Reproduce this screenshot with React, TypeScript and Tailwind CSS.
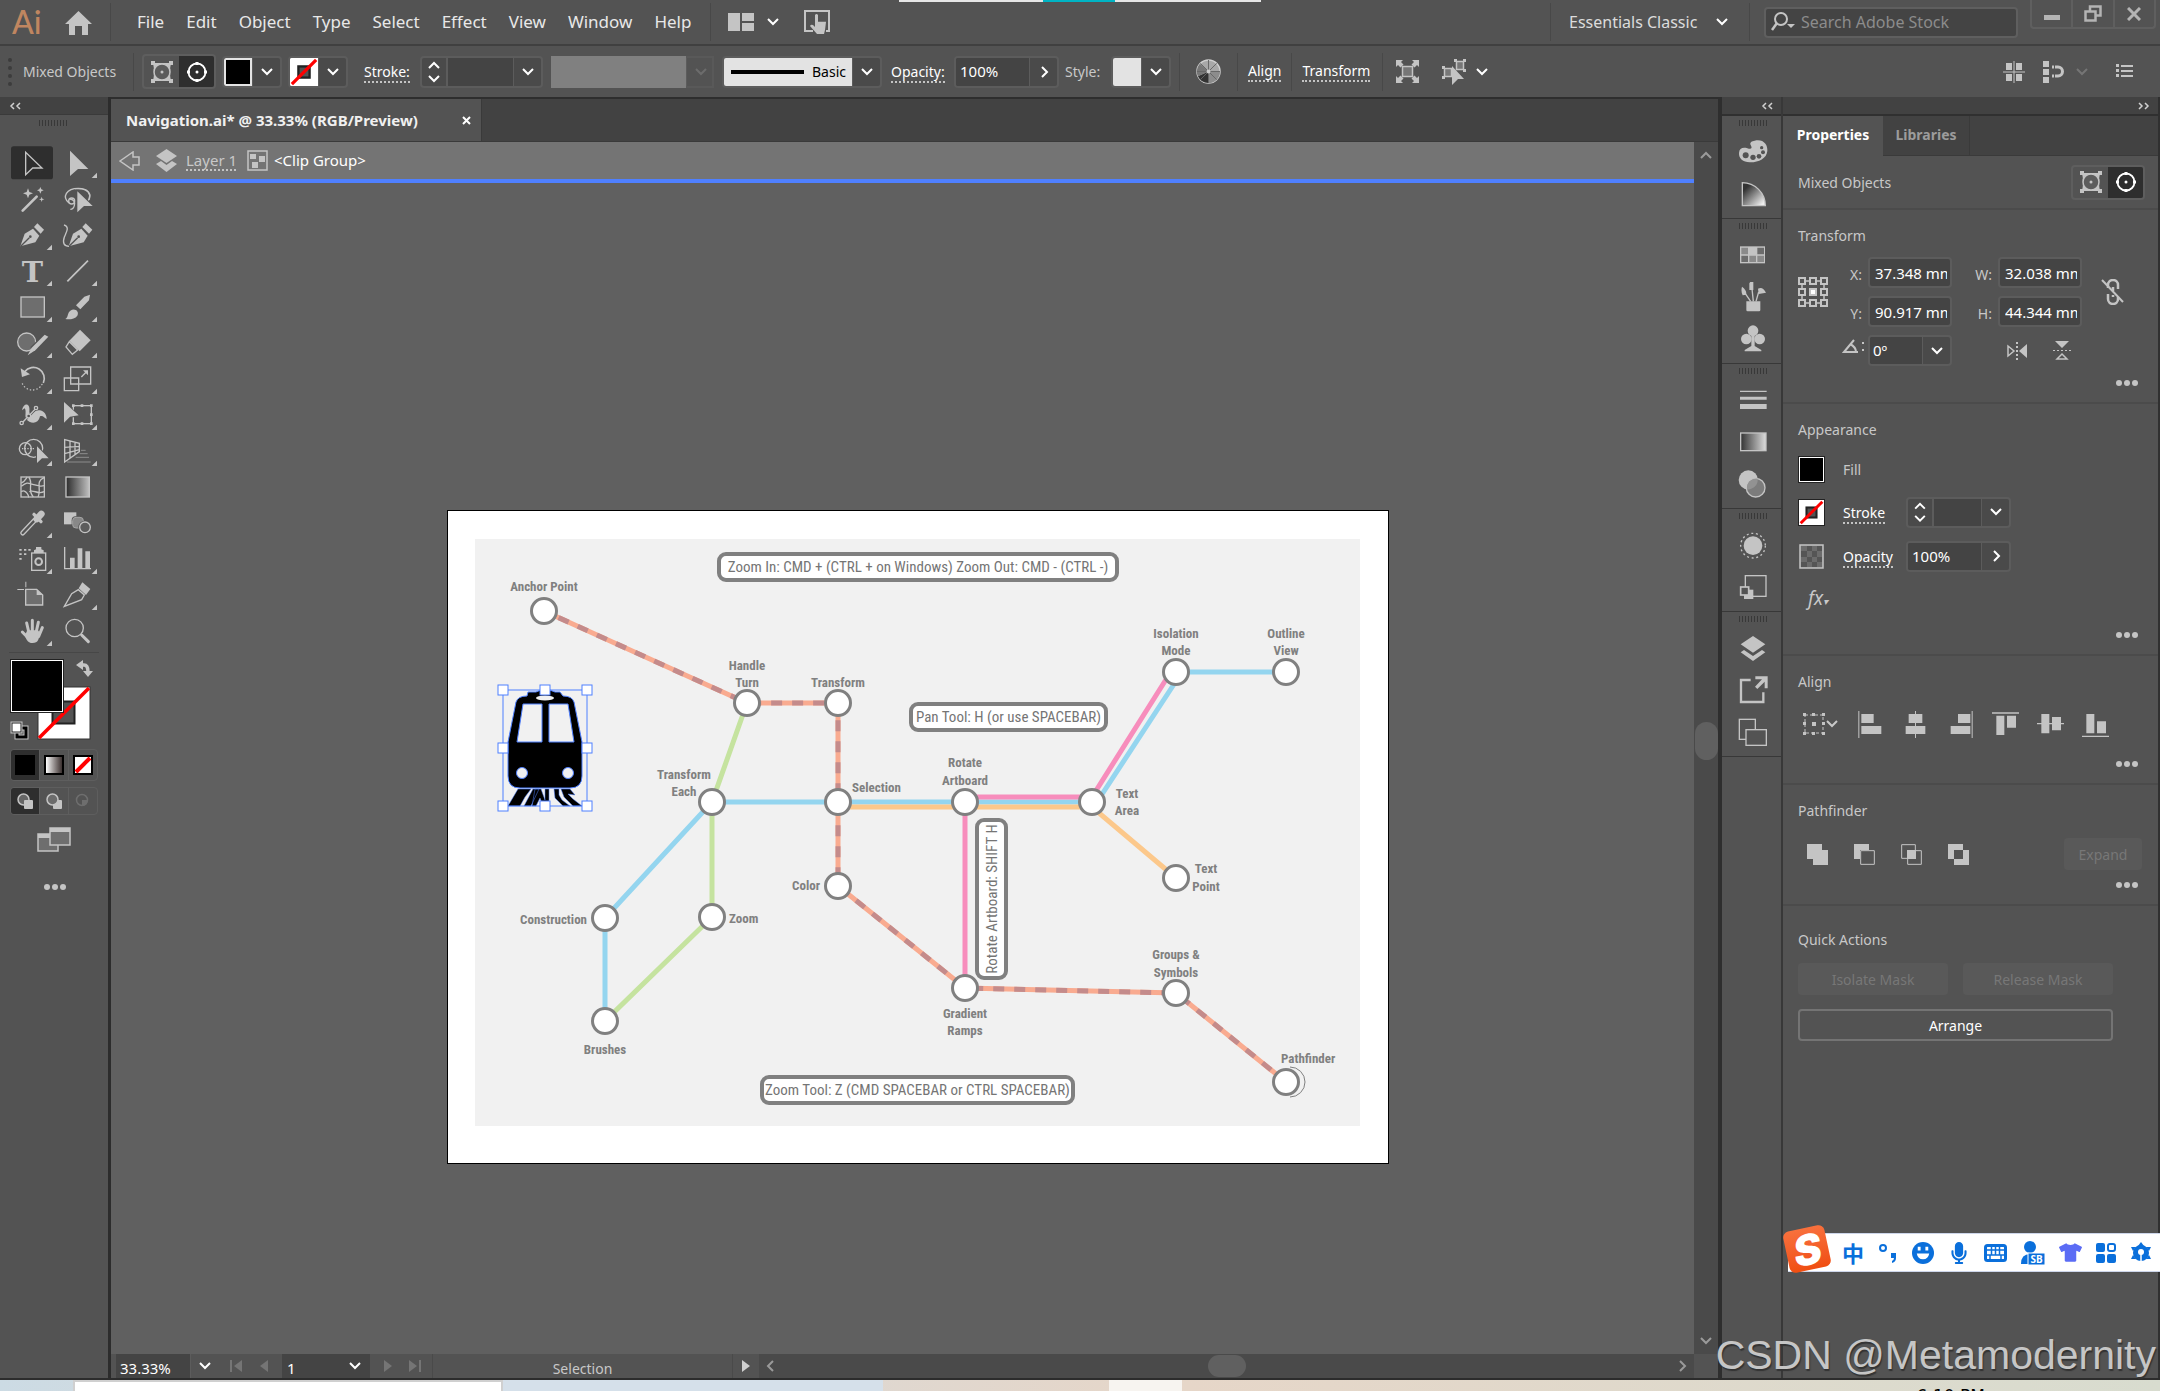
import React from "react";
import clsx from "clsx";
import { FaMicrophone, FaTshirt } from "react-icons/fa";

const menus = ["File", "Edit", "Object", "Type", "Select", "Effect", "View", "Window", "Help"];

/* ---------- small shared pieces ---------- */

const Chevron = ({ dir = "down", className = "" }: { dir?: string; className?: string }) => {
  const d: Record<string, string> = {
    down: "M2 4L7 9L12 4",
    up: "M2 10L7 5L12 10",
    right: "M5 2L10 7L5 12",
    left: "M9 2L4 7L9 12",
  };
  return (
    <svg className={clsx("size-[14px]", className)} viewBox="0 0 14 14" fill="none" stroke="currentColor" strokeWidth="2">
      <path d={d[dir]} />
    </svg>
  );
};

const DoubleChevron = ({ label, dir = "left" }: { label: string; dir?: string }) => (
  <button aria-label={label}>
    <svg className="h-2 w-3" viewBox="0 0 12 8" fill="none" stroke="#d0d0d0" strokeWidth="1.500">
      <path d={dir === "left" ? "M5 1L2 4L5 7M11 1L8 4L11 7" : "M1 1L4 4L1 7M7 1L10 4L7 7"} />
    </svg>
  </button>
);

const Icon = ({ children, className = "size-[30px]", box = "0 0 90 90" }: any) => (
  <svg className={className} viewBox={box} fill="#c4c4c4" stroke="none" aria-hidden="true">
    {children}
  </svg>
);

const Divider = ({ className = "" }) => <div className={clsx("h-[38px] w-px bg-[#484848]", className)} />;

const Grip = () => (
  <div className="flex h-[6px] gap-[2px]">
    {Array.from({ length: 10 }).map((_, i) => (
      <i key={i} className="w-px bg-[#383838]" />
    ))}
  </div>
);

const Dots = () => (
  <button aria-label="More options" className="flex gap-[2px]">
    <i className="size-[6px] rounded-full bg-[#c4c4c4]" />
    <i className="size-[6px] rounded-full bg-[#c4c4c4]" />
    <i className="size-[6px] rounded-full bg-[#c4c4c4]" />
  </button>
);

const Stepper = () => (
  <button aria-label="Step value" className="flex w-[26px] shrink-0 flex-col items-center justify-center border-r-2 border-[#5c5c5c] text-white">
    <Chevron dir="up" />
    <Chevron />
  </button>
);

const Arrow = ({ label, dir = "down", dim = false }: { label: string; dir?: string; dim?: boolean }) => (
  <button
    aria-label={label}
    className={clsx("flex w-7 shrink-0 items-center justify-center border-l border-[#5c5c5c]", dim ? "text-[#6c6c6c]" : "text-white")}
  >
    <Chevron dir={dir} />
  </button>
);

const NoneSwatch = ({ className = "" }) => (
  <svg className={className} viewBox="0 0 30 30">
    <rect width="30" height="30" fill="#fff" />
    <rect x="9" y="9" width="12" height="12" fill="#535353" stroke="#222" strokeWidth="2.5" />
    <path d="M2 28L28 2" stroke="#f00" strokeWidth="3.5" />
  </svg>
);

const EnvelopeToggle = () => (
  <div className="flex h-[35px] w-[74px] overflow-hidden rounded border-2 border-[#5e5e5e]">
    <button aria-label="Edit clipping path" className="flex flex-1 items-center justify-center">
      <Icon className="size-[24px]" box="0 0 24 24">
        <path d="M3 3H21Q19 12 21 21H3Q5 12 3 3Z" />
        <circle cx="12" cy="12" r="8" fill="#5c5c5c" stroke="#c4c4c4" strokeWidth="1.500" />
        <circle cx="12" cy="12" r="1.5" />
        <path d="M1 1h4v4H1zM19 1h4v4h-4zM1 19h4v4H1zM19 19h4v4h-4z" />
      </Icon>
    </button>
    <button aria-label="Edit contents" className="flex flex-1 items-center justify-center bg-[#2e2e2e]">
      <Icon className="size-[24px]" box="0 0 24 24">
        <circle cx="12" cy="12" r="8.5" fill="none" stroke="#fff" strokeWidth="1.8" />
        <circle cx="12" cy="12" r="1.5" fill="#fff" />
        <path d="M10.500 2h3v3h-3zM10.500 19h3v3h-3zM2 10.500h3v3H2zM19 10.500h3v3h-3z" fill="#fff" />
      </Icon>
    </button>
  </div>
);

/* ---------- top bars ---------- */

const MenuBar = () => (
  <header className="relative flex h-[46px] items-center border-b-2 border-[#404040] bg-[#535353]">
    <div className="absolute top-0 left-[41.6%] flex h-[2px] w-[362px] bg-[#e6e6e6]">
      <i className="ml-[144px] w-[72px] bg-[#00b4c4]" />
    </div>
    <span className="ml-3 w-[53px] font-[Lato] text-[32px] leading-8 font-medium text-[#c08660]">Ai</span>
    <button aria-label="Home">
      <Icon className="size-[27px]" box="0 0 27 27">
        <path d="M13.500 2L27 15H23V26H17V17H10V26H4V15H0Z" />
      </Icon>
    </button>
    <Divider className="ml-[18px] h-[29px]" />
    <nav className="ml-[15px] flex">
      {menus.map((m) => (
        <button key={m} className="px-[11px] text-[17px] text-[#e8e8e8]">
          {m}
        </button>
      ))}
    </nav>
    <Divider className="ml-2 h-[29px]" />
    <button aria-label="Arrange documents" className="ml-[17px] flex items-center gap-3 text-white">
      <Icon className="h-[18px] w-[26px]" box="0 0 26 18">
        <path d="M0 0h12v18H0zM14 0h12v8H14zM14 10h12v8H14z" />
      </Icon>
      <Chevron />
    </button>
    <button aria-label="Touch workspace" className="ml-6">
      <Icon className="h-[24px] w-[27px]" box="0 0 27 24">
        <path d="M9 21H1V1H25V21H22" fill="none" stroke="#c4c4c4" strokeWidth="2" />
        <path d="M11 5q1.500-2 3 0v7q1-1 2 0q1-1 2 0q1-1 2 0q1-1 2 0l-1 8-1 4h-7l-7-8q1-2 3-1l2 2z" />
      </Icon>
    </button>
    <div className="ml-auto flex items-center self-stretch">
      <Divider className="h-[29px]" />
      <label className="relative ml-[18px] flex items-center text-[#dcdcdc]">
        <select aria-label="Workspace" className="w-[160px] appearance-none bg-transparent text-[16px]">
          <option>Essentials Classic</option>
        </select>
        <Chevron className="pointer-events-none absolute right-0 text-white" />
      </label>
      <Divider className="ml-5 h-[29px]" />
      <label className="ml-[14px] flex h-[31px] w-[254px] items-center rounded border-2 border-[#5f5f5f] bg-[#444]">
        <Icon className="mx-[5px] h-[22px] w-[25px] shrink-0" box="0 0 25 22">
          <circle cx="10" cy="8" r="6" fill="none" stroke="#c4c4c4" strokeWidth="2" />
          <path d="M6 12L1 19" stroke="#c4c4c4" strokeWidth="2.500" />
          <path d="M16 13h8l-4 4z" />
        </Icon>
        <input aria-label="Search Adobe Stock" placeholder="Search Adobe Stock" className="w-full text-[16px] placeholder:text-[#8c8c8c]" />
      </label>
      <div className="mr-[4px] ml-3 flex h-[29px] w-[126px] self-start rounded-b border-2 border-t-0 border-[#5f5f5f] text-[#b4b4b4]">
        <button aria-label="Minimize" className="flex flex-1 items-center justify-center">
          <i className="mt-2 h-[5px] w-[16px] bg-[#b4b4b4]" />
        </button>
        <button aria-label="Restore" className="flex flex-1 items-center justify-center border-x-2 border-[#5f5f5f]">
          <svg className="size-[18px]" viewBox="0 0 18 18" fill="none" stroke="currentColor" strokeWidth="2.500">
            <path d="M6 6V1.500h10.500v9H12M1.500 6.500h10v9h-10z" />
          </svg>
        </button>
        <button aria-label="Close" className="flex flex-1 items-center justify-center">
          <svg className="size-[14px]" viewBox="0 0 14 14" fill="none" stroke="currentColor" strokeWidth="3">
            <path d="M1 1L13 13M13 1L1 13" />
          </svg>
        </button>
      </div>
    </div>
  </header>
);

const dotted = "border-b-2 border-dotted border-[#c4c4c4] leading-[18px] text-white";
const combo = "flex overflow-hidden rounded border-2 border-[#5c5c5c] bg-[#4a4a4a]";

const ControlBar = () => (
  <div className="flex h-[51px] items-center bg-[#535353] pl-2 text-[14px] text-[#c8c8c8]">
    <div className="h-7 w-1 border-l-4 border-dotted border-[#3c3c3c]" />
    <span className="ml-[11px] w-[110px]">Mixed Objects</span>
    <Divider className="mr-2" />
    <EnvelopeToggle />
    <div className={clsx(combo, "ml-[6px] h-8 w-[60px]")}>
      <button aria-label="Fill" className="flex-1 border-2 border-[#e4e4e4] bg-black" />
      <Arrow label="Fill menu" />
    </div>
    <div className={clsx(combo, "ml-[6px] h-8 w-[60px]")}>
      <button aria-label="Stroke colour" className="flex flex-1 items-center justify-center bg-white">
        <NoneSwatch className="size-[28px]" />
      </button>
      <Arrow label="Stroke menu" />
    </div>
    <div className="ml-[16px] w-14">
      <label htmlFor="stroke" className={dotted}>Stroke:</label>
    </div>
    <div className={clsx(combo, "h-8 w-[123px]")}>
      <Stepper />
      <input id="stroke" className="w-full min-w-0 bg-[#444]" />
      <Arrow label="Stroke weights" />
    </div>
    <div className="ml-2 h-8 w-[135px] bg-[#808080]" />
    <div className="flex h-8 w-7 border-2 border-l-0 border-[#595959]">
      <Arrow label="Profile" dim />
    </div>
    <div className={clsx(combo, "ml-[8px] h-8 w-[160px]")}>
      <button className="flex flex-1 items-center gap-2 bg-[#e3e3e3] pl-[7px] text-black">
        <i className="h-1 w-[73px] bg-black" />
        Basic
      </button>
      <Arrow label="Brush" />
    </div>
    <div className="ml-[9px] w-[63px]">
      <label htmlFor="opacity" className={dotted}>Opacity:</label>
    </div>
    <div className={clsx(combo, "h-8 w-[105px]")}>
      <input id="opacity" defaultValue="100%" className="w-full min-w-0 bg-[#444] pl-1 text-[15px] text-white" />
      <Arrow label="Opacity slider" dir="right" />
    </div>
    <span className="ml-[6px] w-[46px]">Style:</span>
    <div className={clsx(combo, "h-8 w-[60px]")}>
      <button aria-label="Graphic style" className="flex-1 bg-[#e3e3e3]" />
      <Arrow label="Style menu" />
    </div>
    <Divider className="ml-[8px]" />
    <button aria-label="Recolor artwork" className="mx-4">
      <Icon className="size-[25px]" box="0 0 26 26">
        <circle cx="13" cy="13" r="12" fill="#a8a8a8" stroke="#d0d0d0" strokeWidth="1.500" />
        <path d="M13 13L13 25A12 12 0 0 1 2 18Z" fill="#333" />
        <path d="M13 13L2 18A12 12 0 0 1 4 5Z" fill="#777" />
        <path d="M13 13L25 13A12 12 0 0 1 13 25Z" fill="#8c8c8c" />
        <path d="M13 1V25M1 13H25M4.500 4.500L21.500 21.500M21.500 4.500L4.500 21.500" stroke="#666" />
        <circle cx="13" cy="13" r="2" fill="#ccc" />
      </Icon>
    </button>
    <Divider className="mr-[10px]" />
    <button className={dotted}>Align</button>
    <Divider className="mx-[10px]" />
    <button className={dotted}>Transform</button>
    <Divider className="mx-[12px]" />
    <button aria-label="Isolate">
      <Icon className="size-[25px]" box="0 0 25 25">
        <rect x="7.500" y="7.500" width="10" height="10" fill="#777" stroke="#c4c4c4" strokeWidth="1.500" />
        <path d="M1 1h7L6 3l2.500 2.500-3 3L3 6 1 8zM24 1v7l-2-2-2.500 2.500-3-3L19 3l-2-2zM1 24v-7l2 2 2.500-2.500 3 3L6 22l2 2zM24 24h-7l2-2-2.500-2.500 3-3L22 19l2-2z" />
      </Icon>
    </button>
    <button aria-label="Select similar" className="ml-[22px] flex items-center gap-[7px] text-white">
      <Icon className="size-[26px]" box="0 0 26 26">
        <path d="M2.500 9.500h7v8h-7zM14.500 2.500h7v8h-7z" fill="#777" stroke="#c4c4c4" strokeWidth="1.500" />
        <path d="M0 7h3v3H0zM0 17h3v3H0zM12 0h3v3h-3zM21 0h3v3h-3zM21 10h3v3h-3z" />
        <path d="M10 7L22 20H16L10 26Z" />
      </Icon>
      <Chevron />
    </button>
    <div className="mr-[27px] ml-auto flex items-center text-[#c4c4c4]">
      <button aria-label="Snap to grid">
        <Icon className="size-[22px]" box="0 0 22 22">
          <path d="M3 2h6v7H3zM13 2h6v7h-6zM3 13h6v7H3zM13 13h6v7h-6zM10.500 0h1v22h-1zM0 10.500h22v1H0z" />
        </Icon>
      </button>
      <button aria-label="Snap to pixel" className="ml-[18px] flex items-center gap-[10px] text-[#757575]">
        <Icon className="size-[22px]" box="0 0 22 22">
          <path d="M0 0h6v6H0zM0 8h6v6H0zM0 16h6v6H0z" />
          <path d="M9 6h6a4.500 4.500 0 0 1 0 9h-6" fill="none" stroke="#c4c4c4" strokeWidth="3" />
          <path d="M11 4h1v13h-1z" fill={bg} />
        </Icon>
        <Chevron />
      </button>
      <button aria-label="Control panel menu" className="ml-[27px]">
        <Icon className="size-[17px]" box="0 0 17 17">
          <path d="M0 1h3v3H0zM5 2h12v2H5zM0 6h3v3H0zM5 7h12v2H5zM0 11h3v3H0zM5 12h12v2H5z" />
        </Icon>
      </button>
    </div>
  </div>
);

/* ---------- left toolbar ---------- */

const bg = "#535353";
const line = { fill: "none", stroke: "#c4c4c4", strokeWidth: 4 };

const tools: { name: string; more?: boolean; art: React.ReactNode }[] = [
  { name: "Selection", art: <path d="M47 22V89L68 69H96Z" {...line} /> },
  { name: "Direct Selection", more: true, art: <path d="M45 17V93L69 72H100Z" /> },
  {
    name: "Magic Wand",
    art: (
      <>
        <path d="M38 89L80 47" {...line} strokeWidth="8" strokeLinecap="round" />
        <path d="M54 22L58 33L69 37L58 41L54 52L50 41L39 37L50 33ZM91 18L94 25L101 28L94 31L91 38L88 31L81 28L88 25ZM95 47L97 53L103 55L97 57L95 63L93 57L87 55L93 53Z" />
      </>
    ),
  },
  {
    name: "Lasso",
    art: (
      <>
        <path d="M42 66C20 48 34 22 70 22C98 22 112 38 100 58" {...line} />
        <circle cx="50" cy="60" r="9" {...line} />
        <path d="M44 54C54 54 62 62 58 74C56 82 52 85 46 85" {...line} />
        <path d="M63 24V102L90 79H118L63 24Z" fill={bg} />
        <path d="M60 23Q98 20 104 42L103 56" {...line} />
        <path d="M67 31V94L87 75H113Z" />
      </>
    ),
  },
  {
    name: "Pen",
    more: true,
    art: (
      <>
        <path d="M31 88L44 50L69 35L88 56L76 76Z" />
        <path d="M82 19L102 38L92 50L72 30Z" />
        <path d="M32 88L58 62" stroke={bg} strokeWidth="4" />
        <circle cx="61" cy="59" r="4" fill={bg} />
      </>
    ),
  },
  {
    name: "Curvature",
    art: (
      <>
        <path d="M41 88L54 50L79 35L98 56L86 76Z" />
        <path d="M92 19L112 38L102 50L82 30Z" />
        <path d="M42 88L68 62" stroke={bg} strokeWidth="4" />
        <circle cx="71" cy="59" r="4" fill={bg} />
        <path d="M27 24C45 30 34 46 28 60C22 78 27 88 42 88" {...line} />
      </>
    ),
  },
  {
    name: "Type",
    more: true,
    art: (
      <text x="67" y="86" textAnchor="middle" fontSize="86" fontWeight="bold" fontFamily="DejaVu Serif, serif">
        T
      </text>
    ),
  },
  { name: "Line Segment", more: true, art: <path d="M37 85L99 23" {...line} strokeWidth="5" /> },
  { name: "Rectangle", more: true, art: <rect x="33" y="24" width="70" height="60" {...line} fill="#6e6e6e" /> },
  {
    name: "Paintbrush",
    more: true,
    art: (
      <path d="M105 17L102 34L76 61L63 49L88 23ZM31 90C41 84 36 72 46 65C60 56 74 68 67 80C60 91 42 92 31 90Z" />
    ),
  },
  {
    name: "Shaper",
    more: true,
    art: (
      <>
        <circle cx="50" cy="51" r="27" {...line} fill="#6e6e6e" />
        <path d="M108 34L68 74" stroke={bg} strokeWidth="20" />
        <path d="M104 29L115 35L76 76L53 91L65 68Z" />
      </>
    ),
  },
  {
    name: "Eraser",
    more: true,
    art: (
      <>
        <path d="M75 14L107 46L74 79L43 47Z" />
        <path d="M43 50L33 66L52 88L68 75Z" {...line} />
      </>
    ),
  },
  {
    name: "Rotate",
    more: true,
    art: (
      <>
        <path d="M44 32A33 33 0 0 1 100 66" {...line} strokeWidth="5" />
        <path d="M32 22L36 48L60 40Z" />
        <path d="M96 70A33 33 0 0 1 35 62" {...line} strokeDasharray="1 9" strokeLinecap="round" />
      </>
    ),
  },
  {
    name: "Scale",
    more: true,
    art: (
      <>
        <path d="M47 18H107V69H47ZM28 51H71V89H28Z" {...line} />
        <path d="M79 48L96 31" {...line} />
        <path d="M84 28H99V43Z" />
      </>
    ),
  },
  {
    name: "Width",
    more: true,
    art: (
      <>
        <path d="M36 40C40 16 62 16 58 44C60 60 74 36 90 40C104 42 110 56 110 66C100 62 100 54 90 58C84 84 60 80 48 66C44 58 50 40 44 34Z" />
        <path d="M36 78L78 34" stroke={bg} strokeWidth="8" />
        <path d="M36 78L78 34" {...line} />
        <circle cx="35" cy="78" r="5" {...line} fill={bg} />
        <circle cx="78" cy="33" r="5" {...line} fill={bg} />
        <circle cx="56" cy="57" r="6" {...line} fill={bg} />
      </>
    ),
  },
  {
    name: "Free Transform",
    more: true,
    art: (
      <>
        <rect x="55" y="26" width="54" height="54" {...line} />
        <path d="M27 10V82L48 61H78Z" fill={bg} />
        <path d="M27 15V77L45 59L71 55Z" />
        <path d="M51 22h8v8h-8zM77 22h8v8h-8zM105 22h8v8h-8zM105 49h8v8h-8zM105 76h8v8h-8zM77 76h8v8h-8zM51 76h8v8h-8z" />
      </>
    ),
  },
  {
    name: "Shape Builder",
    more: true,
    art: (
      <>
        <circle cx="71" cy="46" r="27" {...line} />
        <circle cx="46" cy="47" r="18" {...line} />
        <path d="M36 47H76" {...line} strokeDasharray="4 4" />
        <path d="M78 32V98L97 78H122Z" fill={bg} />
        <path d="M81 40V90L96 76H116Z" />
      </>
    ),
  },
  {
    name: "Perspective Grid",
    more: true,
    art: (
      <>
        <path d="M29 20V87L73 56V31ZM45 24V76M60 28V66M29 43L73 40M29 62L73 50" {...line} />
        <path d="M78 52H92M74 62H98M62 73H102M36 87H107" fill="none" stroke="#8c8c8c" strokeWidth="3" />
      </>
    ),
  },
  {
    name: "Mesh",
    art: (
      <>
        <rect x="33" y="24" width="70" height="60" {...line} />
        <path d="M34 42C44 40 48 28 52 24M34 52C52 38 54 42 68 46S90 54 102 50M34 68C46 58 60 84 54 84M56 24C72 44 50 62 70 84M102 26C74 38 96 60 84 84M58 68C70 60 84 78 102 68" {...line} />
      </>
    ),
  },
  {
    name: "Gradient",
    art: <rect x="33" y="24" width="70" height="60" {...line} fill="url(#toolGrad)" />,
  },
  {
    name: "Eyedropper",
    more: true,
    art: (
      <>
        <path d="M38 84L74 46" stroke="#c4c4c4" strokeWidth="15" strokeLinecap="round" />
        <path d="M38 84L74 46" stroke={bg} strokeWidth="7" strokeLinecap="round" />
        <path d="M72 28L93 50" stroke="#c4c4c4" strokeWidth="10" strokeLinecap="round" />
        <path d="M80 42L94 27" stroke="#c4c4c4" strokeWidth="20" strokeLinecap="round" />
      </>
    ),
  },
  {
    name: "Blend",
    art: (
      <>
        <rect x="27" y="22" width="37" height="36" />
        <rect x="50" y="34" width="38" height="38" rx="12" fill={bg} />
        <rect x="53" y="37" width="32" height="32" rx="10" fill="#888" stroke="#a4a4a4" strokeWidth="3" />
        <circle cx="90" cy="67" r="20" fill={bg} />
        <circle cx="90" cy="67" r="16" {...line} fill="#5c5c5c" />
      </>
    ),
  },
  {
    name: "Symbol Sprayer",
    more: true,
    art: (
      <>
        <rect x="65" y="36" width="42" height="52" {...line} />
        <path d="M72 36V28L78 25V18H94V25L101 28V36Z" />
        <circle cx="86" cy="62" r="10" {...line} strokeWidth="6" />
        <path d="M28 24h7v5h-7zM42 24h7v5h-7zM55 24h7v5h-7zM28 37h7v5h-7zM42 37h7v5h-7zM28 51h7v5h-7z" />
      </>
    ),
  },
  {
    name: "Column Graph",
    more: true,
    art: (
      <>
        <path d="M29 18V83H108" {...line} />
        <path d="M45 50h14v32h-14zM68 22h14v60h-14zM91 31h14v51h-14z" />
      </>
    ),
  },
  {
    name: "Artboard",
    art: (
      <>
        <path d="M47 37H80L98 54V84H47Z" {...line} fill="#6e6e6e" />
        <path d="M80 37V54H98ZM22 36H42V39H22ZM46 14H49V31H46Z" />
      </>
    ),
  },
  {
    name: "Slice",
    more: true,
    art: (
      <>
        <path d="M28 88L50 50L70 38L88 54L80 68Z" {...line} />
        <path d="M82 16L106 36L93 54L71 34Z" />
      </>
    ),
  },
  {
    name: "Hand",
    more: true,
    art: (
      <>
        <path d="M50 30L57 60M67 22V60M85 28L78 60M97 44L86 70M37 57L56 76" stroke="#c4c4c4" strokeWidth="9" strokeLinecap="round" />
        <path d="M52 52H84L92 62L84 82Q80 90 68 90Q56 90 50 80L44 68Z" />
      </>
    ),
  },
  {
    name: "Zoom",
    art: (
      <>
        <circle cx="59" cy="45" r="26" {...line} />
        <path d="M80 66L100 86" {...line} strokeWidth="9" strokeLinecap="round" />
      </>
    ),
  },
];

const Toolbar = () => (
  <aside className="flex w-[111px] shrink-0 flex-col border-r-[3px] border-[#2c2c2c] bg-[#535353]">
    <div className="flex h-[18px] items-center border-b border-[#3a3a3a] bg-[#424242] pl-[9px]">
      <DoubleChevron label="Collapse tools" />
    </div>
    <div className="mt-[5px] ml-[39px]">
      <Grip />
    </div>
    <div className="mt-[19px] ml-[10px] grid w-[90px] grid-cols-2">
      {tools.map((t, i) => (
        <button key={t.name} aria-label={t.name} className="h-9">
          <Icon className="h-9 w-[45px]" box="0 0 135 108">
            {i === 0 && <rect x="3" y="4" width="126" height="99" rx="8" fill="#2e2e2e" />}
            {t.name === "Gradient" && (
              <linearGradient id="toolGrad">
                <stop offset="0" stopColor="#2c2c2c" />
                <stop offset="1" stopColor="#c0c0c0" />
              </linearGradient>
            )}
            {t.art}
            {t.more && <path d="M126 83V99H110Z" />}
          </Icon>
        </button>
      ))}
    </div>
    <div className="mx-[9px] mt-[3px] h-px bg-[#474747]" />
    <Icon className="mt-[6px] ml-[10px] h-[83px] w-[84px]" box="0 0 84 83">
      <rect x="28" y="28" width="52" height="52" fill="#fff" stroke="#333" />
      <rect x="42.500" y="42.500" width="22" height="22" fill="#535353" stroke="#222" strokeWidth="2" />
      <path d="M29 79L79 29" stroke="#f00" strokeWidth="3.500" />
      <rect x="0.500" y="0.500" width="53" height="53" fill="#000" stroke="#222" />
      <rect x="1.500" y="1.500" width="51" height="51" fill="#000" stroke="#fff" />
      <path d="M70 6H74Q78 6 78 13" fill="none" stroke="#c4c4c4" strokeWidth="3.500" />
      <path d="M66 6L73 1V11ZM73 12H83L78 18Z" />
      <rect x="7" y="69" width="9" height="9" fill="none" stroke="#c4c4c4" strokeWidth="5" />
      <rect x="7" y="69" width="9" height="9" fill="none" stroke="#000" strokeWidth="3" />
      <rect x="1" y="63" width="11" height="11" fill="#fff" stroke="#c4c4c4" />
      <rect x="2" y="64" width="9" height="9" fill="#fff" stroke="#222" />
    </Icon>
    <div className="mt-[7px] ml-[10px] flex h-8 w-[88px] divide-x divide-[#5e5e5e] overflow-hidden rounded border border-[#5e5e5e]">
      <button aria-label="Color" className="flex flex-1 items-center justify-center bg-[#2e2e2e]">
        <i className="size-5 bg-black" />
      </button>
      <button aria-label="Gradient" className="flex flex-1 items-center justify-center">
        <i className="size-5 border-2 border-black bg-linear-to-r from-white to-[#3c3231]" />
      </button>
      <button aria-label="None" className="flex flex-1 items-center justify-center">
        <svg className="size-5" viewBox="0 0 20 20">
          <rect x="1" y="1" width="18" height="18" fill="#fff" stroke="#000" strokeWidth="2" />
          <path d="M3 17L17 3" stroke="#f00" strokeWidth="4" />
        </svg>
      </button>
    </div>
    <div className="mt-[6px] ml-[10px] flex h-7 w-[88px] divide-x divide-[#5e5e5e] overflow-hidden rounded border border-[#5e5e5e]">
      <button aria-label="Draw normal" className="flex flex-1 items-center justify-center bg-[#2e2e2e]">
        <Icon className="size-4" box="0 0 16 16">
          <circle cx="6.500" cy="6.500" r="5.500" fill="#666" stroke="#c4c4c4" strokeWidth="1.500" />
          <rect x="7" y="7" width="9" height="9" rx="1" />
        </Icon>
      </button>
      <button aria-label="Draw behind" className="flex flex-1 items-center justify-center">
        <Icon className="size-4" box="0 0 16 16">
          <rect x="7" y="7" width="9" height="9" rx="1" />
          <circle cx="6.500" cy="6.500" r="5.500" fill="#6c6c6c" stroke="#c4c4c4" strokeWidth="1.500" />
        </Icon>
      </button>
      <button aria-label="Draw inside" className="flex flex-1 items-center justify-center">
        <Icon className="size-4" box="0 0 16 16">
          <circle cx="7" cy="7" r="5.500" fill="none" stroke="#6e6e6e" strokeWidth="1.500" />
          <path d="M7 7h6a6 6 0 0 1-6 6z" fill="#6e6e6e" />
        </Icon>
      </button>
    </div>
    <button aria-label="Screen mode" className="mt-3 ml-[37px] w-[34px]">
      <Icon className="h-[25px] w-[34px]" box="0 0 34 25">
        <rect x="1" y="7" width="20" height="17" fill="#6e6e6e" stroke="#c4c4c4" strokeWidth="1.500" />
        <rect x="1" y="7" width="20" height="4" />
        <rect x="13" y="1" width="20" height="17" fill="#6e6e6e" stroke="#c4c4c4" strokeWidth="1.500" />
        <rect x="13" y="1" width="20" height="4" />
      </Icon>
    </button>
    <div className="mt-8 ml-11">
      <Dots />
    </div>
  </aside>
);

/* ---------- artboard ---------- */

const stations = [
  [544, 611], [747, 703], [838, 703], [712, 802], [838, 802], [838, 886], [605, 918], [712, 917], [605, 1021],
  [1176, 672], [1286, 672], [965, 802], [1092, 802], [1176, 878], [965, 988], [1176, 993], [1286, 1082],
];

const labels: [number, number, "start" | "middle" | "end", string][] = [
  [544, 591, "middle", "Anchor Point"],
  [747, 670, "middle", "Handle"],
  [747, 687, "middle", "Turn"],
  [838, 687, "middle", "Transform"],
  [684, 779, "middle", "Transform"],
  [684, 796, "middle", "Each"],
  [852, 792, "start", "Selection"],
  [820, 890, "end", "Color"],
  [587, 924, "end", "Construction"],
  [729, 923, "start", "Zoom"],
  [605, 1054, "middle", "Brushes"],
  [1176, 638, "middle", "Isolation"],
  [1176, 655, "middle", "Mode"],
  [1286, 638, "middle", "Outline"],
  [1286, 655, "middle", "View"],
  [965, 767, "middle", "Rotate"],
  [965, 785, "middle", "Artboard"],
  [1127, 798, "middle", "Text"],
  [1127, 815, "middle", "Area"],
  [1206, 873, "middle", "Text"],
  [1206, 891, "middle", "Point"],
  [965, 1018, "middle", "Gradient"],
  [965, 1035, "middle", "Ramps"],
  [1176, 959, "middle", "Groups &"],
  [1176, 977, "middle", "Symbols"],
  [1281, 1063, "start", "Pathfinder"],
];

const notes: [number, number, number, string][] = [
  [719, 554, 398, "Zoom In: CMD + (CTRL + on Windows) Zoom Out: CMD - (CTRL -)"],
  [911, 704, 195, "Pan Tool: H (or use SPACEBAR)"],
  [762, 1077, 311, "Zoom Tool: Z (CMD SPACEBAR or CTRL SPACEBAR)"],
];

const dashed = "M544 611L747 703H838V886L965 988L1176 993L1286 1082";

const Artboard = () => (
  <svg
    className="h-[654px] w-[942px] shrink-0 border border-black bg-white"
    viewBox="448 511 940 652"
    fontFamily="'Roboto Condensed', 'Liberation Sans Narrow', Roboto, sans-serif"
  >
    <rect x="475" y="539" width="885" height="587" fill="#f1f1f1" />
    <g fill="none" strokeWidth="5">
      <path d="M747 703L712 802V917L605 1021" stroke="#c5e39f" />
      <path d="M605 1021V918L712 802H1092M1095 805L1180 675M1176 672H1286" stroke="#94d5ef" />
      <path d="M838 807H1092L1176 878" stroke="#fcc88b" />
      <path d="M965 988V797H1092L1172 670" stroke="#f78dbc" />
      <path d={dashed} stroke="#f9ab90" />
      <path d={dashed} stroke="#c48b8b" strokeDasharray="11 10" strokeDashoffset="5" />
    </g>
    {stations.map(([x, y], i) => (
      <circle key={i} cx={x} cy={y} r="12.500" fill="#fff" stroke="#808080" strokeWidth="3" />
    ))}
    <path d="M1290 1067A15 15 0 0 1 1290 1097" fill="none" stroke="#808080" strokeWidth="1" />
    <g fill="#808080" fontSize="13" fontWeight="bold">
      {labels.map(([x, y, anchor, text], i) => (
        <text key={i} x={x} y={y} textAnchor={anchor}>
          {text}
        </text>
      ))}
    </g>
    <g fill="#fff" stroke="#808080" strokeWidth="4">
      {notes.map(([x, y, w]) => (
        <rect key={y} x={x} y={y} width={w} height="26" rx="7" />
      ))}
      <rect x="977" y="820" width="29" height="158" rx="7" />
    </g>
    <g fill="#757575" fontSize="15" textAnchor="middle">
      {notes.map(([x, y, w, text]) => (
        <text key={y} x={x + w / 2} y={y + 18}>
          {text}
        </text>
      ))}
      <text transform="translate(997 899) rotate(-90)">Rotate Artboard: SHIFT H</text>
    </g>
    {/* train */}
    <path d="M528 692H536Q545 687 555 692H560L563 696Q572 696 574 702L582 742V776Q582 788 570 788H520Q508 788 508 776V742L516 702Q518 696 527 696Z" fill="#000" stroke="#4f80ff" strokeWidth="1" />
    <path d="M523 704H542V742H517ZM549 704H568L574 742H549Z" fill="#f1f1f1" stroke="#4f80ff" strokeWidth="1" />
    <ellipse cx="545" cy="698" rx="9" ry="2.500" fill="#f1f1f1" />
    <circle cx="522" cy="773" r="5.500" fill="#f1f1f1" stroke="#4f80ff" strokeWidth="1" />
    <circle cx="568" cy="773" r="5.500" fill="#f1f1f1" stroke="#4f80ff" strokeWidth="1" />
    <path
      d="M518 789H531L525 797L520 806H508ZM533 789H539L531 806H524ZM535 789H541L545 800V789H549V806H543L540 798L536 806H532ZM554 789H559V795L562 800L570 806H563L555 798ZM561 789H570L575 795L568 794L573 799L582 806H573L564 797Z"
      fill="#000"
      stroke="#4f80ff"
      strokeWidth="0.500"
    />
    <rect x="503" y="690" width="84" height="116" fill="none" stroke="#4f80ff" />
    {[503, 545, 587].map((x) =>
      [690, 748, 806].map((y) =>
        x === 545 && y === 748 ? null : (
          <rect key={x + "-" + y} x={x - 5} y={y - 5} width="10" height="10" fill="#fff" stroke="#4f80ff" />
        )
      )
    )}
  </svg>
);

/* ---------- document window ---------- */

const StatusBar = () => (
  <footer className="flex h-[24px] items-stretch bg-[#535353] text-[14px] text-[#c8c8c8]">
    <input aria-label="Zoom" defaultValue="33.33%" className="ml-[5px] w-[74px] bg-[#444] pt-1 pl-1 text-[15px] text-white" />
    <Arrow label="Zoom levels" />
    <div className="flex w-[64px] items-center justify-around px-1 text-[#757575]">
      <svg className="h-3 w-4" viewBox="0 0 16 12" fill="currentColor"><path d="M2 0h2v12H2zM14 0v12L6 6z" /></svg>
      <svg className="h-3 w-4" viewBox="0 0 16 12" fill="currentColor"><path d="M12 0v12L4 6z" /></svg>
    </div>
    <label className="relative flex w-[88px] items-center bg-[#444] text-[15px] text-white">
      <select aria-label="Artboard" className="w-full appearance-none bg-transparent pt-1 pl-[5px]">
        <option>1</option>
      </select>
      <Chevron className="pointer-events-none absolute right-2" />
    </label>
    <div className="flex w-[62px] items-center justify-around px-1 text-[#757575]">
      <svg className="h-3 w-4" viewBox="0 0 16 12" fill="currentColor"><path d="M4 0v12L12 6z" /></svg>
      <svg className="h-3 w-4" viewBox="0 0 16 12" fill="currentColor"><path d="M12 0h2v12h-2zM2 0v12L10 6z" /></svg>
    </div>
    <div className="flex w-[301px] items-center justify-center border-x border-[#4a4a4a] pt-1">Selection</div>
    <button aria-label="Status menu" className="flex w-[26px] items-center justify-center">
      <svg className="h-3 w-2" viewBox="0 0 8 12" fill="#d0d0d0"><path d="M0 0v12L8 6z" /></svg>
    </button>
    <div className="flex flex-1 items-center justify-between bg-[#4a4a4a] px-[5px] text-[#9a9a9a]">
      <Chevron dir="left" />
      <i className="h-[22px] w-[38px] rounded-full bg-[#606060]" />
      <Chevron dir="right" />
    </div>
    <div className="w-[24px] bg-[#535353]" />
  </footer>
);

const Document = () => (
  <main className="flex min-w-0 flex-1 flex-col border-t-2 border-r-[4px] border-[#2e2e2e]">
    <div className="flex h-[43px] border-b border-[#3a3a3a] bg-[#424242]">
      <div className="flex w-[371px] items-center justify-between border-r border-[#3a3a3a] bg-[#535353] pr-[10px] pl-[15px] text-[15px] font-bold text-[#f0f0f0]">
        Navigation.ai* @ 33.33% (RGB/Preview)
        <button aria-label="Close document">
          <svg className="size-[9px]" viewBox="0 0 9 9" stroke="#fff" strokeWidth="2"><path d="M1 1L8 8M8 1L1 8" /></svg>
        </button>
      </div>
    </div>
    <div className="flex flex-1">
      <div className="flex flex-1 flex-col bg-[#606060]">
        <div className="flex h-[41px] items-center border-b-4 border-[#4f80ff] bg-[#747474] pl-2 text-[15px] text-white">
          <Icon className="h-[20px] w-[21px]" box="0 0 21 20">
            <path d="M1 10L14 1V6H20V14H14V19Z" {...line} strokeWidth="1.500" />
          </Icon>
          <Icon className="ml-4 h-[23px] w-[21px]" box="0 0 21 23">
            <path d="M10.500 0L21 7L10.500 14L0 7ZM0 15L5 12L10.500 16L16 12L21 15L10.500 23Z" />
          </Icon>
          <a href="#layer" className="ml-[9px] w-[50px] border-b-2 border-dotted border-[#c4c4c4] leading-[18px] whitespace-nowrap text-[#c8c8c8]">Layer 1</a>
          <Icon className="mr-[6px] ml-[11px] size-[21px]" box="0 0 21 21">
            <path d="M1 1H20V20H1Z" {...line} strokeWidth="1.500" />
            <path d="M3 4h6v5H3zM12 6h6v6h-6zM5 12h6v6H5z" />
          </Icon>
          &lt;Clip Group&gt;
        </div>
        <div className="flex flex-1 items-center justify-center pt-[136px] pl-[31px]">
          <Artboard />
        </div>
      </div>
      <div className="flex w-[24px] flex-col items-center justify-between bg-[#4a4a4a] py-[6px] text-[#9a9a9a]">
        <Chevron dir="up" />
        <i className="mb-[14px] h-[38px] w-[23px] rounded-full bg-[#606060]" />
        <Chevron />
      </div>
    </div>
    <StatusBar />
  </main>
);

/* ---------- collapsed panel dock ---------- */

const dock: { name: string; art: React.ReactNode }[][] = [
  [
    {
      name: "Color",
      art: (
        <>
          <path d="M50 11C75 5 90 22 88 42C86 65 60 77 35 76C15 75 2 65 3 48C4 34 14 30 28 34C40 38 44 34 38 24C34 16 42 12 50 11Z" />
          <g fill={bg}>
            <circle cx="23" cy="55" r="9" />
            <circle cx="45" cy="61" r="8" />
            <circle cx="63" cy="58" r="7" />
            <circle cx="75" cy="46" r="6" />
            <circle cx="71" cy="32" r="5" />
          </g>
        </>
      ),
    },
    {
      name: "Color Guide",
      art: (
        <>
          <linearGradient id="guide" x1="0" y1="0" x2="1" y2="1">
            <stop offset="0.200" stopColor="#333" />
            <stop offset="0.900" stopColor="#eee" />
          </linearGradient>
          <path d="M13 11V80H82A69 69 0 0 0 13 11Z" fill="url(#guide)" stroke="#c4c4c4" strokeWidth="4" />
        </>
      ),
    },
  ],
  [
    {
      name: "Swatches",
      art: (
        <>
          <rect x="6" y="19" width="75" height="51" />
          <path d="M10 23h20v20H10zM58 47h20v19H58zM34 47h20v19H34z" fill="#8a8a8a" />
          <path d="M58 23h20v20H58zM10 47h20v19H10z" fill="#6c6c6c" />
        </>
      ),
    },
    {
      name: "Brushes",
      art: (
        <>
          <path d="M25 58H67V84Q67 88 63 88H29Q25 88 25 84Z" />
          <path d="M38 58L20 32M46 58L42 20M54 58L62 30" {...line} />
          <path d="M12 14Q28 26 24 38L14 40Q8 28 12 14ZM38 -2L46 0V24H34V4ZM60 20Q74 12 84 32L62 36Z" />
        </>
      ),
    },
    {
      name: "Symbols",
      art: (
        <>
          <circle cx="45" cy="20" r="16" />
          <circle cx="25" cy="45" r="16" />
          <circle cx="65" cy="45" r="16" />
          <path d="M40 30H50V66L70 78V82H20V78L40 66Z" />
        </>
      ),
    },
  ],
  [
    { name: "Stroke", art: <path d="M6 17h80v4H6zM6 35h80v9H6zM6 57h80v15H6z" /> },
    {
      name: "Gradient",
      art: (
        <>
          <linearGradient id="dockGrad">
            <stop offset="0" stopColor="#333" />
            <stop offset="1" stopColor="#ddd" />
          </linearGradient>
          <rect x="8" y="18" width="76" height="53" fill="url(#dockGrad)" stroke="#c4c4c4" strokeWidth="4" />
        </>
      ),
    },
    {
      name: "Transparency",
      art: (
        <>
          <circle cx="31" cy="33" r="29" />
          <circle cx="53" cy="56" r="28" fill="#7c7c7c" stroke="#c4c4c4" strokeWidth="4" />
          <path d="M59 29A29 29 0 0 1 27 61A28 28 0 0 1 59 29Z" fill="#929292" />
        </>
      ),
    },
  ],
  [
    {
      name: "Appearance",
      art: (
        <>
          <circle cx="45" cy="47" r="28" />
          <circle cx="45" cy="47" r="37" {...line} strokeDasharray="6 8" />
        </>
      ),
    },
    {
      name: "Graphic Styles",
      art: (
        <>
          <rect x="22" y="11" width="62" height="62" {...line} />
          <rect x="18" y="53" width="28" height="28" fill="#c4c4c4" />
          <rect x="8" y="45" width="24" height="24" {...line} strokeWidth="5" fill={bg} />
        </>
      ),
    },
  ],
  [
    { name: "Layers", art: <path d="M45 9L82 34L45 59L8 34ZM8 58L18 51L45 69L72 51L82 58L45 84Z" /> },
    {
      name: "Asset Export",
      art: (
        <>
          <path d="M38 15H9V81H76V52" {...line} strokeWidth="7" />
          <path d="M52 4H89V40H80V20L58 42L51 35L72 13H52Z" />
        </>
      ),
    },
    {
      name: "Artboards",
      art: (
        <>
          <rect x="4" y="7" width="48" height="60" {...line} />
          <rect x="24" y="38" width="61" height="47" {...line} fill={bg} />
        </>
      ),
    },
  ],
];

const Dock = () => (
  <aside className="flex w-[61px] shrink-0 flex-col border-r-2 border-[#383838] bg-[#535353]">
    <div className="flex h-[19px] shrink-0 items-center justify-end border-b-2 border-[#303030] bg-[#424242] pr-2">
      <DoubleChevron label="Expand dock" />
    </div>
    {dock.map((group, i) => (
      <div key={i} className="flex flex-col items-center border-b border-[#383838] pt-1 pb-[3px] pl-[3px]">
        <div className="h-[11px]">
          <Grip />
        </div>
        {group.map((d) => (
          <button key={d.name} aria-label={d.name} className="flex h-[42px] items-center">
            <Icon>{d.art}</Icon>
          </button>
        ))}
      </div>
    ))}
  </aside>
);

/* ---------- properties panel ---------- */

const Field = ({ id, label, value }: { id: string; label: string; value: string }) => (
  <div className="flex items-center">
    <label htmlFor={id} className="w-[26px] pt-1 pr-[6px] text-right">
      {label}
    </label>
    <input id={id} defaultValue={value} className="h-[31px] w-[84px] rounded border-2 border-[#5c5c5c] bg-[#444] pr-[3px] pl-[5px] text-[15px] text-white" />
  </div>
);

const Section = ({ title, className, children }: any) => (
  <section className={clsx("flex flex-col border-b-2 border-[#4b4b4b] pr-4 pl-[15px]", className)}>
    <h3 className="mt-4 leading-5">{title}</h3>
    {children}
  </section>
);

const alignIcons = [
  "M4 0h3v81H4zM13 9h37v27H13zM13 45h60v24H13z",
  "M39 0h3v81h-3zM20 9h41v27H20zM11 45h59v24H11z",
  "M74 0h3v81h-3zM33 9h37v27H33zM11 45h59v24H11z",
  "M0 4h81v4H0zM13 14h24v58H13zM45 14h27v36H45z",
  "M0 36h81v4H0zM13 9h24v58H13zM45 18h27v40H45z",
  "M0 74h81v4H0zM13 9h24v58H13zM45 31h27v36H45z",
];

const pathIcons = [
  <path d="M0 0h45v18h18v45H18V45H0z" />,
  <>
    <path d="M0 0h45v18H18v27H0z" />
    <path d="M20 20h41v41H20z" {...line} strokeWidth="3" />
  </>,
  <>
    <path d="M2 2h41v41H2zM20 20h41v41H20z" {...line} strokeWidth="3" />
    <path d="M18 18h27v27H18z" />
  </>,
  <path fillRule="evenodd" d="M0 0h45v18h18v45H18V45H0zM18 18v27h27V18z" />,
];

const Properties = () => (
  <aside className="flex w-[377px] shrink-0 flex-col border-r-2 border-[#303030] bg-[#535353] text-[14px] text-[#c8c8c8]">
    <div className="flex h-[19px] shrink-0 items-center justify-end border-b-2 border-[#303030] bg-[#424242] pr-2">
      <DoubleChevron label="Collapse panel" dir="right" />
    </div>
    <div className="flex h-10 shrink-0 bg-[#424242] font-bold">
      <button className="w-[100px] bg-[#535353] pb-[3px] text-white">Properties</button>
      <button className="w-[87px] border-r border-b border-[#3a3a3a] pb-[3px] text-[#9c9c9c]">Libraries</button>
      <div className="flex-1 border-b border-[#3a3a3a]" />
    </div>
    <div className="flex h-[54px] items-center justify-between border-b-2 border-[#4b4b4b] pr-[13px] pl-[15px]">
      Mixed Objects
      <EnvelopeToggle />
    </div>

    <Section title="Transform" className="h-[194px]">
      <div className="mt-[11px] flex">
        <Icon className="mt-5 size-[30px]" box="0 0 30 30">
          <path d="M4 4H26V26H4Z" fill="none" stroke="#c4c4c4" strokeWidth="1.500" />
          {[1, 12, 23].map((x) =>
            [1, 12, 23].map((y) => (
              <rect key={x + "-" + y} x={x} y={y} width="6" height="6" fill={x === 12 && y === 12 ? "#fff" : bg} stroke="#c4c4c4" strokeWidth="2" />
            ))
          )}
        </Icon>
        <div className="ml-[14px] flex flex-col gap-2">
          <Field id="x" label="X:" value="37.348 mm" />
          <Field id="y" label="Y:" value="90.917 mm" />
          <div className="flex">
            <Icon className="mt-1 mr-[3px] h-[14px] w-[23px]" box="0 0 23 14">
              <path d="M12 1L2 13H16M8 5Q14 8 14 13" {...line} strokeWidth="2" />
              <path d="M20 3h2v2h-2zM20 10h2v2h-2z" />
            </Icon>
            <div className={clsx(combo, "h-[31px] w-[84px]")}>
              <input aria-label="Rotate" defaultValue="0º" className="w-full min-w-0 bg-[#444] pl-[3px] text-[15px] text-white" />
              <Arrow label="Angles" />
            </div>
          </div>
        </div>
        <div className="ml-5 flex flex-col gap-2">
          <Field id="w" label="W:" value="32.038 mm" />
          <Field id="h" label="H:" value="44.344 mm" />
          <div className="flex h-[31px] items-center gap-[25px] pl-[35px]">
            <Icon className="h-[18px] w-[21px]" box="0 0 21 18">
              <path d="M1 4V14L7 9Z" {...line} strokeWidth="1.500" />
              <path d="M20 2V16L12 9ZM9 0h2v2H9zM9 4h2v2H9zM9 8h2v2H9zM9 12h2v2H9zM9 16h2v2H9z" />
            </Icon>
            <Icon className="h-[21px] w-[18px]" box="0 0 18 21">
              <path d="M4 19H14L9 14Z" {...line} strokeWidth="1.500" />
              <path d="M2 1H16L9 8ZM0 10h2v1H0zM4 10h2v1H4zM8 10h2v1H8zM12 10h2v1h-2zM16 10h2v1h-2z" />
            </Icon>
          </div>
        </div>
        <Icon className="mt-[22px] ml-[19px] h-[26px] w-[24px]" box="0 0 24 26">
          <path d="M7 9V6A5 5 0 0 1 17 6V10M7 15V20A5 5 0 0 0 17 20V18M12 8V12M12 16V18" {...line} strokeWidth="2.500" />
          <path d="M1 1L22 23" stroke="#c4c4c4" strokeWidth="2" />
        </Icon>
      </div>
      <div className="mt-auto mr-1 mb-4 self-end">
        <Dots />
      </div>
    </Section>

    <Section title="Appearance" className="h-[252px]">
      <div className="mt-4 flex h-[26px] items-center">
        <button aria-label="Fill colour" className="mr-[18px] size-[27px] border border-[#222] bg-black outline -outline-offset-2 outline-white" />
        Fill
      </div>
      <div className="mt-[14px] flex h-8 items-center">
        <NoneSwatch className="mr-[18px] size-[27px] border border-[#222]" />
        <div className="w-[63px]">
          <label htmlFor="pstroke" className={dotted}>Stroke</label>
        </div>
        <div className={clsx(combo, "h-[31px] w-[105px]")}>
          <Stepper />
          <input id="pstroke" className="w-full min-w-0 bg-[#444]" />
          <Arrow label="Weights" />
        </div>
      </div>
      <div className="mt-3 flex h-8 items-center">
        <Icon className="mr-[18px] size-[27px]" box="0 0 27 27">
          <rect x="2" y="2" width="23" height="23" fill="#6c6c6c" stroke="#c4c4c4" strokeWidth="1.500" />
          <path d="M9 3h5v5H9zM19 3h5v5h-5zM3 8h6v6H3zM14 8h5v6h-5zM9 14h5v5H9zM19 14h5v5h-5zM3 19h6v5H3zM14 19h5v5h-5z" fill="#555" />
        </Icon>
        <div className="w-[63px]">
          <label htmlFor="popacity" className={dotted}>Opacity</label>
        </div>
        <div className={clsx(combo, "h-[31px] w-[105px]")}>
          <input id="popacity" defaultValue="100%" className="w-full min-w-0 bg-[#444] pl-1 text-[15px] text-white" />
          <Arrow label="Opacity slider" dir="right" />
        </div>
      </div>
      <button aria-label="Effects" className="mt-[10px] ml-[10px] self-start text-[19px] leading-8 italic">
        fx<span className="text-[10px]">▾</span>
      </button>
      <div className="mt-auto mr-1 mb-4 self-end">
        <Dots />
      </div>
    </Section>

    <Section title="Align" className="h-[129px]">
      <div className="mt-[18px] flex h-[28px] items-center">
        <button aria-label="Align to" className="mr-[18px] ml-[5px] flex items-center">
          <Icon className="size-[22px]" box="0 0 22 22">
            <path d="M2 2H20V20H2Z" fill="none" stroke="#c4c4c4" strokeDasharray="3 2" />
            <path d="M0 0h3v3H0zM9 0h3v3H9zM19 0h3v3h-3zM0 9h3v3H0zM9 9h4v4H9zM19 9h3v3h-3zM0 19h3v3H0zM9 19h3v3H9zM19 19h3v3h-3z" />
          </Icon>
          <Chevron />
        </button>
        <div className="flex gap-[18px]">
          {alignIcons.map((d, i) => (
            <button key={i} aria-label={"Align option " + (i + 1)}>
              <Icon className="size-[27px]" box="0 0 81 81">
                <path d={d} />
              </Icon>
            </button>
          ))}
        </div>
      </div>
      <div className="mt-auto mr-1 mb-4 self-end">
        <Dots />
      </div>
    </Section>

    <Section title="Pathfinder" className="h-[121px]">
      <div className="mt-[17px] flex h-8 items-center gap-[26px] pl-[9px]">
        {pathIcons.map((art, i) => (
          <button key={i} aria-label={"Pathfinder mode " + (i + 1)}>
            <Icon className="size-[21px]" box="0 0 63 63">
              {art}
            </Icon>
          </button>
        ))}
        <button className="ml-auto h-8 w-[78px] rounded bg-[#595959] text-[#777]">Expand</button>
      </div>
      <div className="mt-auto mr-1 mb-4 self-end">
        <Dots />
      </div>
    </Section>

    <section className="flex flex-col pl-[15px]">
      <h3 className="mt-6 leading-5">Quick Actions</h3>
      <div className="mt-[13px] grid w-[315px] grid-cols-2 gap-x-[15px] gap-y-[14px]">
        <button className="h-8 rounded bg-[#595959] text-[#777]">Isolate Mask</button>
        <button className="h-8 rounded bg-[#595959] text-[#777]">Release Mask</button>
        <button className="col-span-2 h-8 rounded border-2 border-[#747474] text-white">Arrange</button>
      </div>
    </section>
  </aside>
);

/* ---------- things floating over the app ---------- */

const InputMethodBar = () => (
  <div className="absolute right-0 bottom-[119px] flex h-[39px] w-[372px] items-center justify-between border-y border-[#cdd6ea] bg-white pr-2 pl-[54px] text-[#0a6fdb]">
    <div className="absolute -top-[6px] -left-[2px] flex size-[42px] -rotate-12 items-center justify-center rounded-md bg-linear-to-b from-[#f8703c] to-[#f04e10] font-[Inter] text-[42px] font-black text-white italic">
      S
    </div>
    <span className="pb-[2px] font-['Noto_Sans_CJK_SC'] text-[22px] leading-6 font-bold">中</span>
    <svg className="h-5 w-5" viewBox="0 0 20 20" fill="currentColor">
      <circle cx="5" cy="5" r="3" fill="none" stroke="currentColor" strokeWidth="2" />
      <path d="M13 10h5v5q0 4-4 5v-2q2-1 2-3h-3z" />
    </svg>
    <svg className="size-[22px]" viewBox="0 0 23 23" fill="currentColor">
      <circle cx="11.500" cy="11.500" r="11.500" />
      <path d="M5 12H18Q17 18 11.500 18T5 12ZM6 5h3v4H6zM14 5h3v4h-3z" fill="#fff" />
    </svg>
    <FaMicrophone className="size-[22px]" />
    <svg className="h-[18px] w-[23px]" viewBox="0 0 23 18">
      <rect x="1.500" y="1.500" width="20" height="15" rx="2" fill="none" stroke="currentColor" strokeWidth="3" />
      <path d="M3 6H20M3 11H20M7.500 3V11M11.500 3V11M15.500 3V11M6 11V16M17 11V16" stroke="currentColor" strokeWidth="1.500" />
    </svg>
    <svg className="size-6" viewBox="0 0 24 24" fill="currentColor">
      <circle cx="9" cy="6" r="6" />
      <path d="M0 23Q0 13 9 13Q14 13 16 16V23Z" />
      <rect x="7" y="12" width="17" height="12" fill="currentColor" stroke="#fff" strokeWidth="1" />
      <text x="15.500" y="22" textAnchor="middle" fontSize="10" fontWeight="bold" fill="#fff">
        SB
      </text>
    </svg>
    <FaTshirt className="size-[23px] text-[#5b6cf5]" />
    <svg className="size-5" viewBox="0 0 20 20" fill="currentColor">
      <rect width="9" height="9" rx="2" />
      <rect x="12" y="1" width="7" height="7" rx="2" fill="none" stroke="currentColor" strokeWidth="2" />
      <rect y="11" width="9" height="9" rx="2" />
      <rect x="11" y="11" width="9" height="9" rx="2" />
    </svg>
    <svg className="size-[22px]" viewBox="0 0 22 22" fill="currentColor">
      <circle cx="11" cy="11" r="8" />
      <path d="M11 0L14 4H8ZM1 5L6 5L3 9ZM21 5L19 9L16 5ZM1 17L3 13L6 17ZM21 17L16 17L19 13Z" />
      <circle cx="11" cy="10" r="3" fill="#fff" />
      <path d="M11 9V22" stroke="#fff" strokeWidth="1.500" />
    </svg>
  </div>
);

const Taskbar = () => (
  <div className="flex h-[11px] shrink-0 overflow-hidden bg-linear-to-r from-[#ccdbe4] via-[#e6d6c8] via-55% to-[#d8dccf]">
    <div className="ml-[73px] w-[430px] border-2 border-b-0 border-[#d0d0d0] bg-white" />
    <div className="w-[380px] bg-[#d5e0ea]" />
    <div className="ml-[226px] w-[73px] bg-[#f7f4f0]" />
    <span className="mt-[6px] mr-[175px] ml-auto font-['DejaVu_Sans'] text-[17px] leading-5 text-black">6:10 PM</span>
  </div>
);

const App = () => {
  return (
    <div className="relative flex min-h-screen flex-col overflow-hidden bg-[#535353] font-['Noto_Sans','Open_Sans',sans-serif] select-none">
      <MenuBar />
      <ControlBar />
      <div className="flex flex-1 border-b-2 border-[#2c2c2c]">
        <Toolbar />
        <Document />
        <Dock />
        <Properties />
      </div>
      <Taskbar />
      <InputMethodBar />
      <p className="absolute right-1 bottom-[12px] font-['Liberation_Sans'] text-[41px] leading-[48px] text-[#c6c6c6] text-shadow-[1px_2px_1px_#333]">
        CSDN @Metamodernity
      </p>
    </div>
  );
};

export default App;
